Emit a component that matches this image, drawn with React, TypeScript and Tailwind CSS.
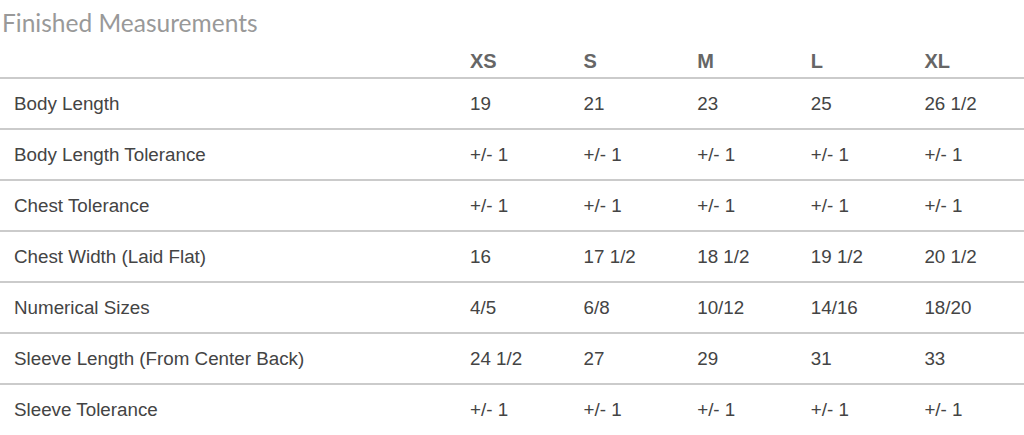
import React from "react";

interface measureRow {
  label: string;
  values: string[];
}

const sizes = ["XS", "S", "M", "L", "XL"];

const rows: measureRow[] = [
  { label: "Body Length", values: ["19", "21", "23", "25", "26 1/2"] },
  { label: "Body Length Tolerance", values: ["+/- 1", "+/- 1", "+/- 1", "+/- 1", "+/- 1"] },
  { label: "Chest Tolerance", values: ["+/- 1", "+/- 1", "+/- 1", "+/- 1", "+/- 1"] },
  { label: "Chest Width (Laid Flat)", values: ["16", "17 1/2", "18 1/2", "19 1/2", "20 1/2"] },
  { label: "Numerical Sizes", values: ["4/5", "6/8", "10/12", "14/16", "18/20"] },
  { label: "Sleeve Length (From Center Back)", values: ["24 1/2", "27", "29", "31", "33"] },
  { label: "Sleeve Tolerance", values: ["+/- 1", "+/- 1", "+/- 1", "+/- 1", "+/- 1"] },
];

function App() {
  return (
    <div className="w-[1024px] h-[435px] bg-white overflow-hidden font-['Liberation_Sans',Arial,sans-serif]">
      <div className="h-[43px] flex items-center pl-[2px] pt-[4px] text-[24.5px] text-[#999] font-['Lato',sans-serif]">
        Finished Measurements
      </div>

      {/* size header */}
      <div className="grid grid-cols-[456px_repeat(5,1fr)] h-[34px] items-center text-[20px] font-bold text-[#666]">
        <div />
        {sizes.map((s) => (
          <div key={s} className="pl-[14px] pt-[2px]">
            {s}
          </div>
        ))}
      </div>

      {rows.map((row) => (
        <div
          key={row.label}
          className="grid grid-cols-[456px_repeat(5,1fr)] h-[51px] items-center pt-[2px] border-t-2 border-[#cbcbcb] text-[18.8px] text-[#444]"
        >
          <div className="pl-[14px]">{row.label}</div>
          {row.values.map((v, i) => (
            <div key={i} className="pl-[14px]">
              {v}
            </div>
          ))}
        </div>
      ))}
    </div>
  );
}

export default App;
